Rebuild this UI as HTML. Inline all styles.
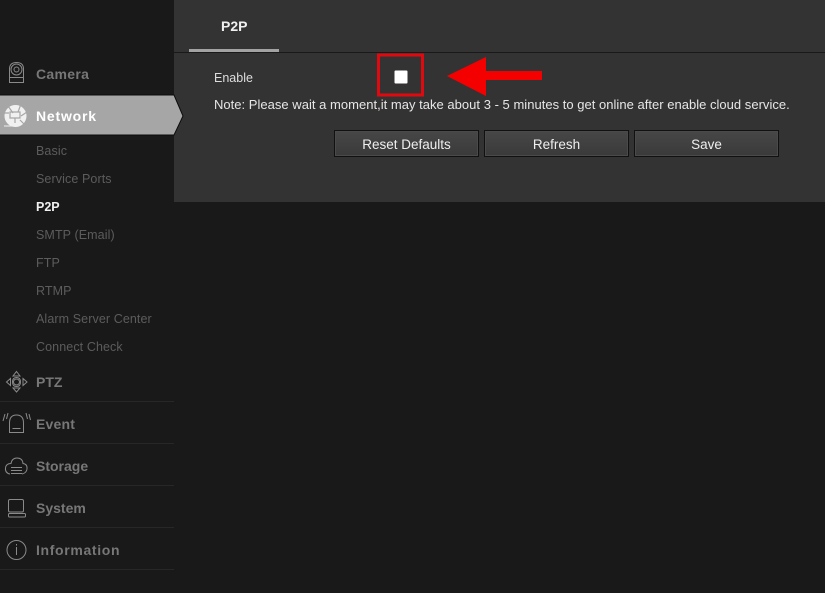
<!DOCTYPE html>
<html><head><meta charset="utf-8"><style>
html,body{margin:0;padding:0;background:#191919}
#r{position:relative;width:825px;height:593px;overflow:hidden;background:#191919;font-family:"Liberation Sans",sans-serif}
.t{position:absolute;white-space:nowrap;line-height:16px}
.m{left:36px;font-size:14px;font-weight:bold;color:#777}
.s{left:36px;font-size:12.500px;color:#5c5c5c;letter-spacing:.1px}
.l{position:absolute;left:0;width:174px;height:1px;background:#272727}
.b{position:absolute;top:130px;width:143px;height:25px;border:1px solid #111;outline:1px solid #4a4a4a;outline-offset:-2px;background:linear-gradient(#474747,#3a3a3a);color:#eee;font-size:13.500px;line-height:27px;text-align:center}
svg{position:absolute;left:0;top:0}
</style></head><body><div id="r">
<div style="position:absolute;left:174px;top:0;width:651px;height:202px;background:#333"></div>
<div style="position:absolute;left:174px;top:52px;width:651px;height:1px;background:#191919"></div>
<div style="position:absolute;left:189px;top:49px;width:90px;height:3px;background:#a3a3a3"></div>
<div class="t" style="left:221px;top:18px;font-size:14px;font-weight:bold;color:#f0f0f0">P2P</div>
<div class="t" style="left:214px;top:70px;font-size:12.500px;color:#ddd">Enable</div>
<div class="t" style="left:214px;top:97px;font-size:13px;color:#e6e6e6;letter-spacing:.02px">Note: Please wait a moment,it may take about 3 - 5 minutes to get online after enable cloud service.</div>
<div class="b" style="left:334px">Reset Defaults</div>
<div class="b" style="left:484px">Refresh</div>
<div class="b" style="left:634px">Save</div>
<svg width="825" height="593" fill="none">
<rect x="378.500" y="55" width="44" height="40" stroke="#e0090f" stroke-width="3"/>
<rect x="394.500" y="70.500" width="13" height="13" rx="1" fill="#fff"/>
<path d="M447 76L486 57V71H542V80H486V96Z" fill="#f50000"/>
<path d="M-3 95H174L183 116L174 135H-3Z" fill="#a6a6a6" stroke="#0c0c0c"/>
<g stroke="#8a8a8a" stroke-width="1">
<path d="M9.500 82.500V69Q9.500 62.500 16.500 62.500Q23.500 62.500 23.500 69V82.500ZM9.500 77.500H23.500"/>
<circle cx="16.500" cy="69.500" r="5.500"/><circle cx="16.500" cy="69.500" r="2.500"/>
<path d="M16.500 371.500L20 376H13ZM16.500 392L20 388H13ZM6.500 382L10.500 378.500V385.500ZM27 382L23 378.500V385.500Z"/>
<circle cx="16.500" cy="382" r="3"/><path d="M12.500 382Q12.500 377.500 16.500 377.500Q20.500 377.500 20.500 382Q20.500 386.500 16.500 386.500Q12.500 386.500 12.500 382"/>
<path d="M9.500 432.500V423Q9.500 415 16.500 415Q23.500 415 23.500 423V432.500ZM12.500 428.500H20.500M3 421L5 414M6.500 419L8 413M26 413L27.500 419M29 414L30.500 420"/>
<path d="M10 474Q5 473 5.500 468Q6 463.500 11 463.500Q12 458 17 458Q22.500 458 23 463.500Q27.500 464 27 469Q26.500 473 22 474M11 467.500H22M11 470.500H22M11 473.500H22"/>
<rect x="8.500" y="499.500" width="15" height="12.500" rx="1.500"/><rect x="8.500" y="513.500" width="17" height="3.500" rx="1"/>
<circle cx="16.500" cy="550" r="9.500"/><path d="M16.500 547V555M16.500 544V545.500"/>
</g>
<path d="M16 105A11 11 0 1 1 15 127A11 11 0 1 1 16 105Z" fill="#f0f0f0"/>
<g stroke="#a6a6a6" stroke-width="1.200"><path d="M8 106L13 113M21 104L18 112M27 112L21 116M24 124L20 120M3 113H9"/><path d="M10 112H20V118H10ZM15 118V123"/></g>
<path d="M4 126H13V122" stroke="#f0f0f0"/>
</svg>
<div class="t m" style="top:66px;letter-spacing:.3px">Camera</div>
<div class="t m" style="top:108px;color:#fff;letter-spacing:.8px">Network</div>
<div class="t s" style="top:143px">Basic</div>
<div class="t s" style="top:171px">Service Ports</div>
<div class="t s" style="top:199px;color:#f0f0f0;font-weight:bold;letter-spacing:0">P2P</div>
<div class="t s" style="top:227px">SMTP (Email)</div>
<div class="t s" style="top:255px">FTP</div>
<div class="t s" style="top:283px">RTMP</div>
<div class="t s" style="top:311px">Alarm Server Center</div>
<div class="t s" style="top:339px">Connect Check</div>
<div class="t m" style="top:374px">PTZ</div>
<div class="t m" style="top:416px;letter-spacing:.2px">Event</div>
<div class="t m" style="top:458px">Storage</div>
<div class="t m" style="top:500px">System</div>
<div class="t m" style="top:542px;letter-spacing:.65px">Information</div>
<div class="l" style="top:401px"></div><div class="l" style="top:443px"></div><div class="l" style="top:485px"></div><div class="l" style="top:527px"></div><div class="l" style="top:569px"></div>
</div></body></html>
